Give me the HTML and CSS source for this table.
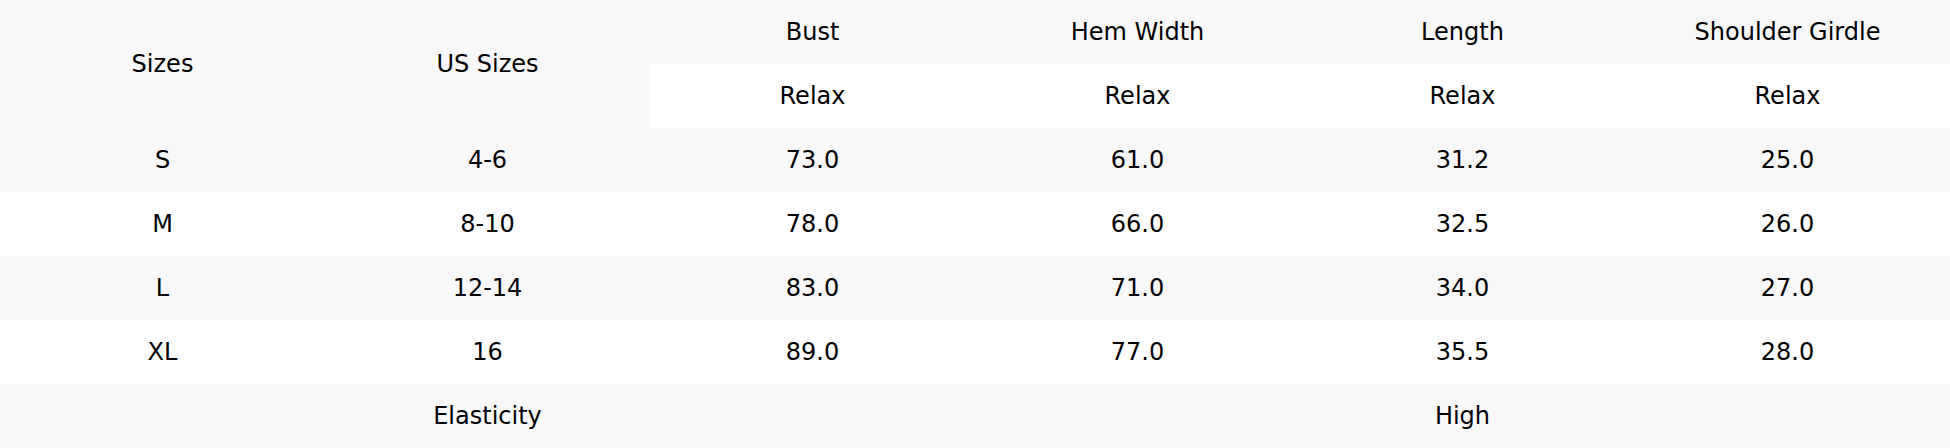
FILE: index.html
```html
<!DOCTYPE html>
<html>
<head>
<meta charset="utf-8">
<link rel="stylesheet" href="styles.css">
</head>
<body>
<table class="size-table">
  <colgroup>
    <col><col><col><col><col><col>
  </colgroup>
  <thead>
    <tr class="grey">
      <th rowspan="2">Sizes</th>
      <th rowspan="2">US Sizes</th>
      <th>Bust</th>
      <th>Hem Width</th>
      <th>Length</th>
      <th>Shoulder Girdle</th>
    </tr>
    <tr class="white">
      <th>Relax</th>
      <th>Relax</th>
      <th>Relax</th>
      <th>Relax</th>
    </tr>
  </thead>
  <tbody>
    <tr class="grey"><td>S</td><td>4-6</td><td>73.0</td><td>61.0</td><td>31.2</td><td>25.0</td></tr>
    <tr class="white"><td>M</td><td>8-10</td><td>78.0</td><td>66.0</td><td>32.5</td><td>26.0</td></tr>
    <tr class="grey"><td>L</td><td>12-14</td><td>83.0</td><td>71.0</td><td>34.0</td><td>27.0</td></tr>
    <tr class="white"><td>XL</td><td>16</td><td>89.0</td><td>77.0</td><td>35.5</td><td>28.0</td></tr>
    <tr class="grey"><td colspan="3">Elasticity</td><td colspan="3">High</td></tr>
  </tbody>
</table>
</body>
</html>
```
FILE: styles.css
```css
html, body {
  margin: 0;
  padding: 0;
  background: #ffffff;
  height: 448px;
  overflow: hidden;
}
.size-table {
  width: 1950px;
  table-layout: fixed;
  border-collapse: collapse;
  border-spacing: 0;
  font-family: "DejaVu Sans", sans-serif;
  font-size: 24px;
  line-height: 28px;
  color: #000000;
}
.size-table th,
.size-table td {
  height: 64px;
  padding: 0;
  text-align: center;
  vertical-align: middle;
  font-weight: normal;
  box-sizing: border-box;
}
.grey th,
.grey td {
  background: #f8f8f8;
}
.white th,
.white td {
  background: #ffffff;
}
```
